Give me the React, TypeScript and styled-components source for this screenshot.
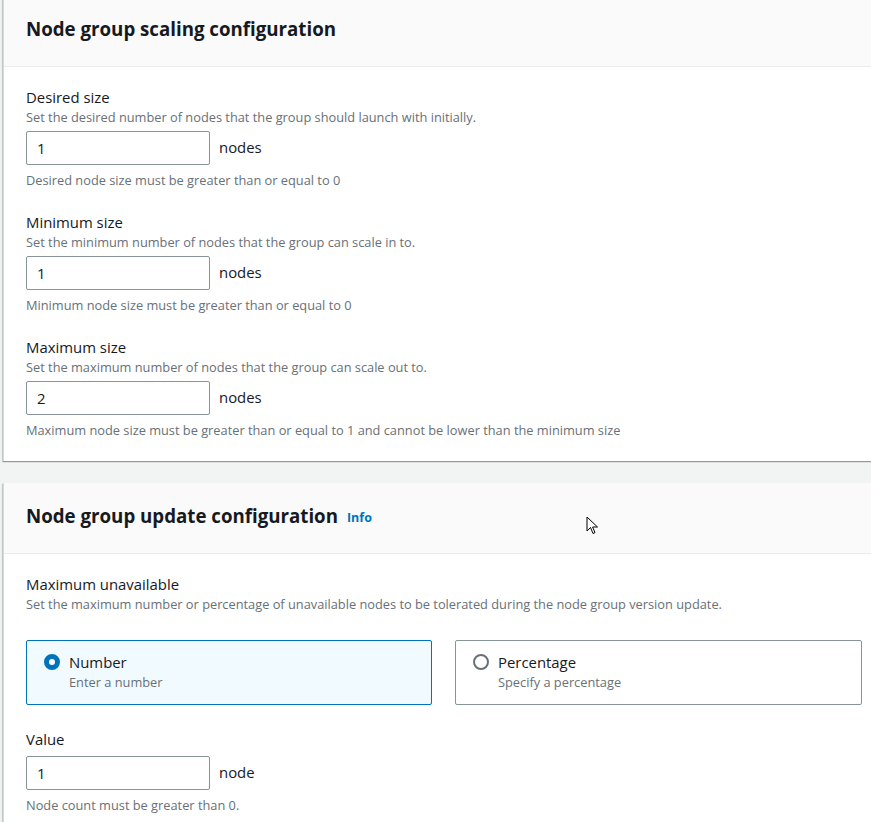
import React from "react";
import styled, { createGlobalStyle } from "styled-components";

const GlobalStyle = createGlobalStyle`
  html, body {
    margin: 0;
    padding: 0;
    background: #f2f3f3;
    overflow: hidden;
    font-family: "Open Sans", "Noto Sans", Arial, sans-serif;
    color: #16191f;
  }
`;

const Page = styled.div`
  position: relative;
  width: 871px;
  height: 822px;
  overflow: hidden;
  padding-left: 3px;
  box-sizing: border-box;
`;

const Stack = styled.div`
  margin-top: -4px;
  display: flex;
  flex-direction: column;
  gap: 22px;
`;

const Card = styled.section`
  width: 890px;
  background: #fff;
  border-left: 1px solid #d5dbdb;
  box-shadow: 0 1px 1px 0 rgba(0, 28, 36, 0.3), -1px 1px 1px 0 rgba(0, 28, 36, 0.15);
  flex-shrink: 0;
`;

const CardHeader = styled.header`
  background: #fafafa;
  border-bottom: 1px solid #eaeded;
  height: 70px;
  display: flex;
  align-items: center;
  padding: 0 22px;
  gap: 9px;
`;

const Title = styled.h2`
  margin: -6px 0 0;
  font-size: 18.7px;
  font-weight: 700;
  color: #16191f;
`;

const InfoLink = styled.a`
  font-size: 12.5px;
  font-weight: 700;
  color: #0073bb;
  margin-top: -2px;
`;

const CardBody = styled.div<{ $gap?: number }>`
  padding: 20px 22px 21px;
  display: flex;
  flex-direction: column;
  gap: ${(p) => p.$gap ?? 22}px;
  width: 836px;
`;

const Field = styled.div`
  display: flex;
  flex-direction: column;
`;

const Label = styled.div`
  font-size: 14.9px;
  line-height: 20px;
  color: #16191f;
`;

const Description = styled.div`
  font-size: 12.8px;
  line-height: 20px;
  color: #687078;
`;

const InputRow = styled.div<{ $gap?: number }>`
  display: flex;
  align-items: center;
  gap: 9px;
  margin-top: ${(p) => p.$gap ?? 4}px;
`;

const Input = styled.div`
  width: 184px;
  height: 34px;
  box-sizing: border-box;
  border: 1px solid #879596;
  border-radius: 2px;
  padding: 0 10px;
  display: flex;
  align-items: center;
  font-size: 14.9px;
  color: #16191f;
  background: #fff;
`;

const Unit = styled.span`
  font-size: 14.9px;
  margin-top: -2px;
`;

const Help = styled.div`
  font-size: 12.8px;
  line-height: 20px;
  color: #687078;
  margin-top: 5px;
`;

const Tiles = styled.div`
  display: grid;
  grid-template-columns: 406px 407px;
  gap: 23px;
  margin-top: 26px;
`;

const Tile = styled.div<{ $selected?: boolean }>`
  height: 65px;
  box-sizing: border-box;
  border: 1px solid ${(p) => (p.$selected ? "#0073bb" : "#879596")};
  background: ${(p) => (p.$selected ? "#f1faff" : "#fff")};
  border-radius: 2px;
  padding: 11px 17px;
  display: flex;
  gap: 9px;
  align-items: flex-start;
`;

const Radio = styled.span<{ $checked?: boolean }>`
  width: 16px;
  height: 16px;
  box-sizing: border-box;
  border-radius: 50%;
  margin-top: 2px;
  flex-shrink: 0;
  background: #fff;
  border: ${(p) => (p.$checked ? "5px solid #0073bb" : "2px solid #687078")};
`;

const TileText = styled.div`
  display: flex;
  flex-direction: column;
`;

const Cursor = styled.svg`
  position: absolute;
  left: 586px;
  top: 516px;
`;

type SizeField = { label: string; desc: string; value: string; unit: string; help: string };

const scaling: SizeField[] = [
  {
    label: "Desired size",
    desc: "Set the desired number of nodes that the group should launch with initially.",
    value: "1",
    unit: "nodes",
    help: "Desired node size must be greater than or equal to 0",
  },
  {
    label: "Minimum size",
    desc: "Set the minimum number of nodes that the group can scale in to.",
    value: "1",
    unit: "nodes",
    help: "Minimum node size must be greater than or equal to 0",
  },
  {
    label: "Maximum size",
    desc: "Set the maximum number of nodes that the group can scale out to.",
    value: "2",
    unit: "nodes",
    help: "Maximum node size must be greater than or equal to 1 and cannot be lower than the minimum size",
  },
];

export default function App() {
  return (
    <>
      <GlobalStyle />
      <Page>
        <Stack>
          <Card>
            <CardHeader>
              <Title>Node group scaling configuration</Title>
            </CardHeader>
            <CardBody>
              {scaling.map((f) => (
                <Field key={f.label}>
                  <Label>{f.label}</Label>
                  <Description>{f.desc}</Description>
                  <InputRow>
                    <Input>{f.value}</Input>
                    <Unit>{f.unit}</Unit>
                  </InputRow>
                  <Help>{f.help}</Help>
                </Field>
              ))}
            </CardBody>
          </Card>
          <Card>
            <CardHeader>
              <Title>Node group update configuration</Title>
              <InfoLink>Info</InfoLink>
            </CardHeader>
            <CardBody $gap={24}>
              <Field>
                <Label>Maximum unavailable</Label>
                <Description>
                  Set the maximum number or percentage of unavailable nodes to be tolerated during the node group version update.
                </Description>
                <Tiles>
                  <Tile $selected>
                    <Radio $checked />
                    <TileText>
                      <Label>Number</Label>
                      <Description>Enter a number</Description>
                    </TileText>
                  </Tile>
                  <Tile>
                    <Radio />
                    <TileText>
                      <Label>Percentage</Label>
                      <Description>Specify a percentage</Description>
                    </TileText>
                  </Tile>
                </Tiles>
              </Field>
              <Field>
                <Label>Value</Label>
                <InputRow $gap={7}>
                  <Input>1</Input>
                  <Unit>node</Unit>
                </InputRow>
                <Help>Node count must be greater than 0.</Help>
              </Field>
            </CardBody>
          </Card>
        </Stack>
        <Cursor width="14" height="20" viewBox="0 0 14 20">
          <path d="M1 1 L1 15 L4.5 11.5 L7 17.5 L9 16.6 L6.6 11 L11.5 11 Z" fill="#fff" stroke="#000" strokeWidth="1" strokeLinejoin="round" />
        </Cursor>
      </Page>
    </>
  );
}
